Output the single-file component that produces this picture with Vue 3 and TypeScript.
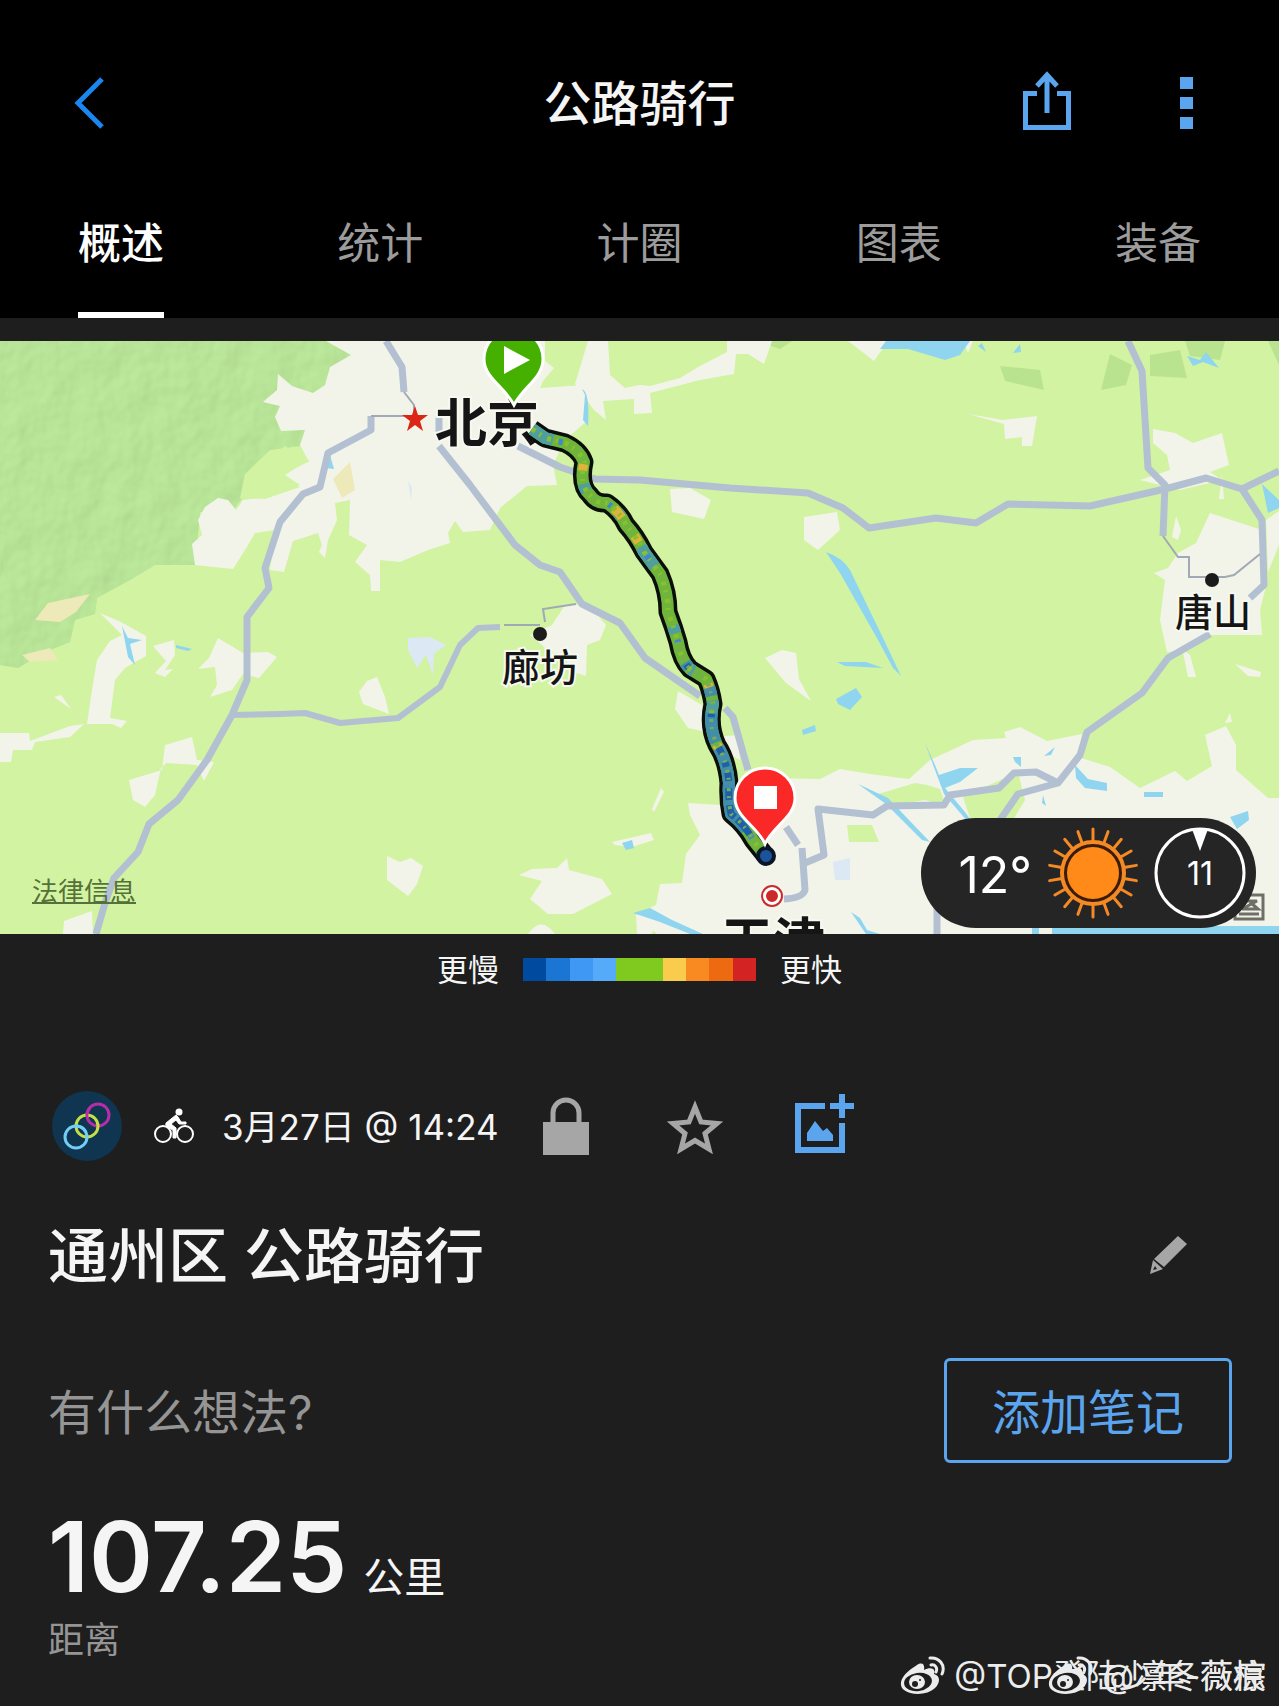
<script setup lang="ts">
import { ref } from 'vue'

const tabs: string[] = ['概述', '统计', '计圈', '图表', '装备']
const activeTab = ref<string>(tabs[0])

const paceColors: string[] = [
  '#004b9f', '#1a76d2', '#3f98f3', '#56aafa', '#80c91f',
  '#80c91f', '#f9cc4e', '#f98a22', '#ed6a10', '#d32323',
]

const track =
  'M532 429 L545 438 L565 443 Q580 450 584 462 Q579 485 590 495 Q596 504 607 503 Q620 512 626 525 Q636 536 644 552 Q652 563 660 574 Q668 592 668 612 Q674 628 678 642 Q681 660 690 669 L706 679 Q711 690 713 704 Q708 726 717 745 Q727 760 729 783 Q728 800 731 814 Q745 825 753 840 L765 855'

const lowerTrack =
  'M678 642 Q681 660 690 669 L706 679 Q711 690 713 704 Q708 726 717 745 Q727 760 729 783 Q728 800 731 814 Q745 825 753 840 L765 855'

const rays: number[] = Array.from({ length: 18 }, (_, i) => i * 20)

const watermarks: string[] = ['@TOP登陆少年-薇棕', '@凛冬薇痕']
</script>

<template>
  <main class="page">
    <header class="header">
      <div class="topbar">
        <button class="icon-btn back" aria-label="返回">
          <svg width="32" height="56" viewBox="0 0 32 56"><path d="M29 4 L5 28 L29 52" fill="none" stroke="#1a86f0" stroke-width="5" /></svg>
        </button>
        <h1>公路骑行</h1>
        <div class="actions">
          <button class="icon-btn" aria-label="分享">
            <svg width="48" height="64" viewBox="0 0 48 64" fill="none" stroke="#5ba4ee" stroke-width="5">
              <path d="M14 22.500H2.500V56.500H45.500V22.500H34" />
              <path d="M24 42V4M14 15L24 4L34 15" />
            </svg>
          </button>
          <button class="icon-btn" aria-label="更多">
            <svg width="14" height="54" viewBox="0 0 14 54" fill="#5ba4ee"><path d="M0 1h13v12H0zM0 21h13v12H0zM0 41h13v12H0z" /></svg>
          </button>
        </div>
      </div>
      <nav class="tabs">
        <button
          v-for="tab in tabs"
          :key="tab"
          :class="['tab', { active: tab === activeTab }]"
          @click="activeTab = tab"
        >{{ tab }}</button>
      </nav>
    </header>

    <section class="map">
      <svg class="map-canvas" viewBox="0 341 1279 593" role="img" aria-label="骑行路线地图">
        <defs>
          <filter id="relief" x="0" y="0" width="100%" height="100%">
            <feTurbulence type="fractalNoise" baseFrequency="0.035 0.03" numOctaves="3" seed="9" result="n" />
            <feDiffuseLighting in="n" surfaceScale="2.500" lighting-color="#c4efa2" result="l">
              <feDistantLight azimuth="225" elevation="64" />
            </feDiffuseLighting>
            <feComposite in="l" in2="SourceGraphic" operator="in" />
          </filter>
        </defs>
        <rect x="0" y="341" width="1279" height="593" fill="#d2f3a2" />

        <!-- hills -->
        <path d="M0 341H340L360 355L330 400L300 446L270 450L247 472L241 500L232 512L200 512L195 565L155 565L130 580L97 598L95 614L75 620L70 642L45 652L18 668L0 665Z" fill="#b4e594" />
        <path d="M0 341H340L360 355L330 400L300 446L270 450L247 472L241 500L232 512L200 512L195 565L155 565L130 580L97 598L95 614L75 620L70 642L45 652L18 668L0 665Z" filter="url(#relief)" opacity="0.600" />
        <path d="M1000 366L1040 370L1044 390L1005 381ZM1110 354L1132 365L1126 385L1101 390ZM1150 355L1180 350L1187 378L1150 376ZM1185 341H1225L1220 360L1190 356ZM1268 341H1279V365ZM757 341H792L780 349Z" fill="#b4df8c" opacity="0.800" />

        <!-- built-up areas -->
        <g fill="#f2f4ea">
          <path d="M326 341L351 355L330 367L325 385L313 393L292 386L278 374L277 390L263 402L280 406L275 417L281 431L305 430L300 445L308 460L285 475L300 485L265 497L243 500L236 510L228 500L218 498L205 507L198 520L202 535L192 544L195 565L233 569L245 550L255 533L275 530L270 570L284 572L293 541L318 533L322 545L319 552L325 558L328 540L337 520L335 503L350 500L349 535L367 545L355 562L370 575L371 591L380 591L380 560L400 562L428 550L450 543L448 533L455 521L463 532L490 530L500 508L527 486L557 485L553 465L565 440L588 420L585 385L540 388L543 381L554 368L545 361V341Z" />
          <path d="M588 341H608L610 375L625 388L640 385L650 386L680 378L700 366L727 352V341H772L764 364L748 354L736 354L734 374L700 380L650 393L652 413L634 414V399L603 401L606 420L594 410L575 384Z" />
          <path d="M848 341H888L874 361ZM963 341H973L968 353ZM968 414L1003 420L1037 416L1032 446L1022 446V437L1005 439L1004 424Z" />
          <path d="M1153 429L1175 433L1193 443L1222 433L1225 447L1229 465L1210 472L1222 480L1180 490L1140 480L1170 470L1167 455L1153 443ZM1210 513L1262 530L1265 590L1260 610L1262 635L1207 635L1190 650L1167 652L1160 620L1165 580L1154 573L1168 568L1178 553L1196 543ZM1279 511L1266 520L1268 572L1279 545ZM1176 516L1181 530L1178 540L1172 537ZM1222 475L1224 499L1219 499Z" />
          <path d="M670 489L690 488L711 500L704 519L672 512ZM804 517L837 512L840 530L818 550L804 540ZM765 658L782 650L796 653L799 679L811 701L786 683ZM678 691L702 705L707 732L688 728L675 709ZM715 737L738 735L740 760L730 755Z" />
          <path d="M565 605L588 604L606 625L600 640L587 645L586 676L570 671L565 655L550 652L530 635L552 625Z" />
          <path d="M100 613L121 622L146 636V656L125 668L115 680L110 718L127 721L121 728L112 724H87L92 690L97 660L110 641L122 635ZM153 646L174 640L175 655L165 670L173 669L165 677L155 673L166 661ZM198 669L209 658L218 638L243 653L268 652L277 657L259 678L243 674L232 690L210 697L217 685L215 667ZM54 697L61 695L71 709ZM0 733H29L30 741L70 726L84 724L70 737L35 742L32 750L13 750L11 762H0ZM165 745L192 737L197 760L214 762L204 781L197 765L166 763L161 768L155 795L145 807L133 800L129 780L162 770ZM359 692L367 681L377 677L385 697L389 714L363 704ZM387 856L400 862L411 858L423 866L417 884L408 896L387 880ZM64 921L92 911L93 934H63ZM519 875L532 869L557 868L567 858L569 870L602 879L612 894L573 914H548L530 899L542 881ZM612 842L651 833L654 840L632 847L615 845ZM652 809L661 788L664 792L654 812Z" />
          <path d="M688 803L720 805L731 795L760 778L820 779L840 769L870 774L909 779L930 760L973 740L1006 738L1004 732L1020 727L1047 741L1082 734L1078 757L1110 767L1140 788L1175 771L1187 781L1212 766L1205 735L1226 726L1236 745V770L1268 798H1279V934H657L636 915L656 905L660 884L682 883L686 854L700 835L690 815Z" />
          <path d="M528 934Q541 915 555 934ZM636 915L656 918L652 934H637Z" />
          <path d="M1163 635H1210L1183 652L1188 677L1196 677L1190 655ZM1235 664L1261 672L1260 677L1248 676ZM1225 723L1230 713L1232 722Z" />
        </g>
        <g fill="#d2f3a2">
          <path d="M847 825L872 825L879 842L849 842ZM963 797L1018 772L1025 800L1007 830L970 818ZM925 800L946 806L940 789L927 785L915 783L875 795L890 806Z" />
          <path d="M240 498L245 474L285 446L310 461L282 475L300 487L265 499Z" />
        </g>
        <path d="M333 479L350 462L355 490L342 498ZM35 620L48 603L90 594L76 612L60 622ZM22 655L50 648L58 660L30 662Z" fill="#eee9b8" />

        <!-- water -->
        <g fill="#8fd5ef">
          <path d="M886 341H970L960 355L945 360L925 354L908 349H880ZM978 346L986 352L982 343ZM1013 353L1020 344L1021 352ZM1187 356L1200 360L1206 352L1219 368L1203 362L1193 366ZM1262 484L1279 500V508L1268 513ZM330 455L334 469L326 468ZM122 626L128 638L142 640L130 644L135 665L128 657ZM176 645L192 649L188 651L176 648Z" />
          <path d="M826 552Q843 558 850 570L884 640L901 676L893 668L878 640L840 573ZM837 662H866L883 668L845 666ZM836 699L856 688L862 697L850 710L838 704ZM802 730L815 725L816 731L803 735ZM622 843L632 840L634 848L626 850ZM633 913L650 908L672 920L703 934H690L660 922Z" />
          <path d="M925 743L935 765L939 775L960 768L978 768L960 782L945 788L965 812L975 826L968 822L944 794L935 770ZM858 784L888 798L930 842L922 840L886 804ZM1013 757H1021V767L1015 762ZM1044 756L1055 747L1051 755ZM1075 765L1088 779L1107 783V791L1085 788L1076 778ZM1144 792H1163V797H1144ZM1230 817L1248 811L1249 820L1237 829ZM1052 926H1279V934H1052ZM1032 926H1039V934H1032ZM851 912L860 918L867 930L880 934H866ZM582 389Q590 392 588 426L583 420L585 395Z" />
          <path d="M1043 795L1046 806L1042 803Z" />
        </g>
        <path d="M408 638L430 637L446 645L434 654L433 675L426 655L417 668L408 650ZM833 862L850 858V880L835 880ZM408 481L412 488L411 500Z" fill="#dce8f3" />

        <!-- roads -->
        <g fill="none" stroke="#b3c0d2" stroke-width="7" stroke-linejoin="round">
          <path d="M386 341L402 367L404 392" />
          <path d="M371 416V430L328 453L320 487L303 494L280 522L265 568L269 588L247 617V680L232 715L207 760L178 800L149 824L138 852L114 878L105 903L96 934" />
          <path d="M231 715L280 714L305 713L340 723L398 718L440 687L460 645L478 628L500 627" stroke-width="6" />
          <path d="M439 446L470 485L515 545L540 565L560 572L582 604L620 623L645 658L700 696M725 708L733 717L748 770M786 827L798 845" stroke-width="7" />
          <path d="M518 446L560 467L595 479L640 480L730 488L808 493L843 508L869 528L936 518L976 523L1008 504L1090 506L1165 489L1206 478L1242 489L1279 471" />
          <path d="M1128 341L1142 371L1148 468L1165 485L1163 536M1242 489L1262 520L1264 585L1250 598" />
          <path d="M1210 634L1168 658L1142 693L1087 732L1080 755L1058 783L1036 772L1014 773L999 788L950 795L944 805L887 806L873 815L818 809L824 855L805 863M1058 783L1018 794L1000 820" />
          <path d="M802 848L805 890Q803 898 784 899M937 905V934" />
        </g>
        <path d="M404 392L414 405V416H371M504 625H540M545 622L543 609L576 604M1163 536L1178 557H1189V577H1225L1234 575L1260 554" fill="none" stroke="#a0a9b5" stroke-width="2" />
        <path d="M439 417V432" stroke="#b3c0d2" stroke-width="7" />

        <!-- places -->
        <path d="M415 406L418 415L428 415L420 421L423 431L415 425L407 431L410 421L402 415L412 415Z" fill="#dc2515" />
        <g fill="#1b1b1b">
          <circle cx="540" cy="634" r="7" />
          <circle cx="1212" cy="580" r="7" />
        </g>
        <g fill="none" stroke="#cc2a2a">
          <circle cx="772" cy="896" r="10" stroke-width="2" fill="#fff" />
          <circle cx="772" cy="896" r="4" stroke-width="4" fill="#cc2a2a" />
        </g>
        <g class="place">
          <text class="large" x="435" y="442" font-size="52">北京</text>
          <text x="502" y="681" font-size="38">廊坊</text>
          <text x="1175" y="626" font-size="38">唐山</text>
          <text class="large" x="721" y="961" font-size="52">天津</text>
        </g>

        <!-- ridden track, coloured by pace -->
        <g fill="none" stroke-linejoin="round">
          <path :d="track" stroke="#0b0f0b" stroke-width="19" />
          <path :d="track" stroke="#6fb43c" stroke-width="12" />
          <path :d="track" stroke="#4f9fa0" stroke-width="12" stroke-dasharray="24 62 8 40 4 37" />
          <path :d="track" stroke="#e0b43a" stroke-width="9" stroke-dasharray="0 66 7 55 12 22 8 97" />
          <path :d="track" stroke="#8ac02c" stroke-width="5" stroke-dasharray="4 5 2 7" />
          <path :d="track" stroke="#3f88d0" stroke-width="6" stroke-dasharray="0 30 4 87 3 31" />
          <path :d="lowerTrack" stroke="#3d8ab4" stroke-width="12" stroke-dasharray="0 22 6 30 9 17 30 6 90 2" opacity="0.900" />
          <path :d="lowerTrack" stroke="#1d60a8" stroke-width="7" stroke-dasharray="0 24 4 57 3 32 7 9 5 6 8 7 12 5 14 3 20 4" />
          <path :d="lowerTrack" stroke="#74ab5c" stroke-width="4" stroke-dasharray="3 5 2 8" />
          <circle cx="766" cy="856" r="8" fill="#1b549c" stroke="#0a1626" stroke-width="4" />
        </g>
        <g stroke="#fff" stroke-width="3">
          <path d="M514 405C505 387 484 378 484 359A29 29 0 0 1 543 359C543 378 523 387 514 405Z" fill="#45b000" />
          <path d="M765 844C757 826 735 817 735 798A30 30 0 0 1 795 798C795 817 773 826 765 844Z" fill="#fb2828" />
        </g>
        <path d="M504 346V374L530 360ZM754 786H777V809H754Z" fill="#fff" />
        <g fill="none" stroke="#6e7068" stroke-width="3">
          <path d="M1235 895H1263V919H1235ZM1241 901H1257L1242 909H1258L1250 902M1239 914H1259" />
        </g>
      </svg>

      <a class="legal" href="#legal">法律信息</a>

      <aside class="weather" aria-label="天气">
        <span class="temp">12°</span>
        <svg width="92" height="92" viewBox="-46 -46 92 92">
          <g stroke="#f58a25" stroke-width="3" stroke-linecap="round">
            <line v-for="angle in rays" :key="angle" x1="0" y1="-33" x2="0" y2="-44" :transform="`rotate(${angle})`" />
          </g>
          <circle r="31" fill="#3a1c05" stroke="#f58a25" stroke-width="4" />
          <circle r="26" fill="#ff8919" />
        </svg>
        <span class="wind">
          <svg width="92" height="92" viewBox="-46 -46 92 92">
            <circle r="44" fill="none" stroke="#fff" stroke-width="3" />
            <path d="M-8 -44H8L0 -22Z" fill="#fff" />
          </svg>
          <b>11</b>
        </span>
      </aside>
    </section>

    <div class="legend">
      <span>更慢</span>
      <div class="scale"><i v-for="(color, i) in paceColors" :key="i" :style="{ background: color }"></i></div>
      <span>更快</span>
    </div>

    <section class="details">
      <div class="meta">
        <svg class="avatar" width="70" height="70" viewBox="0 0 70 70">
          <circle cx="35" cy="35" r="35" fill="#0f3550" />
          <g fill="none" stroke-width="3">
            <circle cx="46" cy="24" r="11" stroke="#b52ea8" />
            <circle cx="35" cy="35" r="11" stroke="#c3e046" />
            <circle cx="24" cy="46" r="11" stroke="#74cdf4" />
            <path d="M35 26A11 11 0 0 1 38 17" stroke="#b52ea8" />
            <path d="M24 35A11 11 0 0 1 34 41" stroke="#74cdf4" />
          </g>
        </svg>
        <svg class="bike" width="40" height="36" viewBox="0 0 40 36">
          <g fill="none" stroke="#fff" stroke-width="2"><circle cx="9" cy="26" r="8" /><circle cx="31" cy="26" r="8" /></g>
          <circle cx="25" cy="4" r="3.500" fill="#fff" />
          <path d="M22 7L12 15Q11 17 13 19L19 22V30H22V20L17 16L22 12L25 16H32V14H27L24 9Z" fill="#fff" stroke="#fff" stroke-linejoin="round" />
        </svg>
        <time>3月27日 @ 14:24</time>
        <button class="icon-btn lock" aria-label="隐私">
          <svg width="46" height="60" viewBox="0 0 46 60"><path d="M10 28V17A13 13 0 0 1 36 17V28" fill="none" stroke="#a6a6a6" stroke-width="5" /><path d="M0 26H46V59H0Z" fill="#a6a6a6" /></svg>
        </button>
        <button class="icon-btn star" aria-label="收藏">
          <svg width="58" height="56" viewBox="0 0 58 56"><path d="M29 9L35 24L51 25.500L39 35.500L43 51L29 42.500L15 51L19 35.500L7 25.500L23 24Z" fill="none" stroke="#a6a6a6" stroke-width="5" /></svg>
        </button>
        <button class="icon-btn photo" aria-label="添加照片">
          <svg width="60" height="64" viewBox="0 0 60 64" fill="#5ba4ee"><path d="M0 9H30V15H6V53H44V29H50V59H0ZM44 0H50V9H59V15H50V24H44V15H35V9H44ZM12 47V39L20 27L28 37L32 34L38 41V47Z" /></svg>
        </button>
      </div>

      <div class="title-row">
        <h2>通州区 公路骑行</h2>
        <button class="icon-btn" aria-label="编辑">
          <svg width="40" height="40" viewBox="0 0 40 40"><path d="M29 0L38 8L15 31L5 23ZM4 24L14 33L1 38ZM6 30L4 34L8 33Z" fill="#a6a6a6" fill-rule="evenodd" /></svg>
        </button>
      </div>

      <div class="note-row">
        <p>有什么想法?</p>
        <button class="note-btn">添加笔记</button>
      </div>

      <dl class="stat">
        <dd><strong>107.25</strong><span>公里</span></dd>
        <dt>距离</dt>
      </dl>
    </section>

    <div v-for="mark in watermarks" :key="mark" class="watermark">
      <svg width="46" height="40" viewBox="0 0 46 40">
        <path d="M17 9C22 6 25 8 24 14C30 11 36 12 34 18C41 20 40 27 35 32C28 39 12 40 4 34C-3 28 2 18 17 9Z" fill="#ececec" />
        <ellipse cx="18" cy="26" rx="14" ry="9" fill="#1e1e1e" transform="rotate(-8 18 26)" />
        <ellipse cx="17" cy="26" rx="8" ry="7" fill="#ececec" />
        <circle cx="15" cy="28" r="3" fill="#1e1e1e" /><circle cx="20" cy="24" r="1" fill="#1e1e1e" />
        <path d="M30 2C39 1 46 9 42 18M31 9C35 8 38 12 36 16" fill="none" stroke="#ececec" stroke-width="3" stroke-linecap="round" />
      </svg>
      <span>{{ mark }}</span>
    </div>
  </main>
</template>

<style>
body {
  margin: 0;
  background: #1e1e1e;
}
</style>

<style scoped>
.page {
  position: relative;
  min-height: 100vh;
  background: #1e1e1e;
  color: #f5f5f5;
  font-family: Inter, "Noto Sans CJK SC", sans-serif;
}
h1, h2, p, dl, dd {
  margin: 0;
}
button {
  padding: 0;
  border: 0;
  background: none;
  color: inherit;
  font: inherit;
  cursor: pointer;
}
svg {
  display: block;
}
.header {
  background: #000;
  margin-bottom: 23px;
}
.topbar {
  display: grid;
  grid-template-columns: 1fr auto 1fr;
  align-items: center;
  height: 126px;
  padding: 40px 85px 0 73px;
}
.topbar {
  padding: 40px 85px 0;
}
.back {
  justify-self: start;
  margin-left: -12px;
}
h1 {
  padding-top: 2px;
  font-size: 48px;
  font-weight: 500;
  line-height: 60px;
}
.actions {
  display: flex;
  align-items: center;
  justify-content: flex-end;
  gap: 109px;
}
.tabs {
  display: flex;
  justify-content: space-between;
  padding: 0 78px;
}
.tab {
  height: 152px;
  padding-bottom: 4px;
  border-top: 6px solid transparent;
  border-bottom: 6px solid transparent;
  color: #9c9c9c;
  font-size: 43px;
}
.tab.active {
  border-bottom-color: #fff;
  color: #fff;
  font-weight: 500;
}
.map {
  position: relative;
  overflow: hidden;
}
.map-canvas {
  width: 100%;
  height: auto;
}
.place {
  fill: #151515;
  stroke: #f7f9f0;
  stroke-width: 4px;
  paint-order: stroke;
  font-family: "Noto Sans CJK SC", sans-serif;
  font-weight: 500;
}
.large {
  font-weight: 700;
}
.legal {
  position: absolute;
  left: 32px;
  bottom: 22px;
  color: #557038;
  font-size: 26px;
  line-height: 40px;
  text-decoration-thickness: 2px;
}
.weather {
  position: absolute;
  right: 23px;
  bottom: 6px;
  display: flex;
  align-items: center;
  justify-content: flex-end;
  gap: 15px;
  box-sizing: border-box;
  width: 335px;
  height: 110px;
  padding-right: 10px;
  border-radius: 55px;
  background: #252525;
  color: #fff;
}
.temp {
  padding-top: 4px;
  font-size: 50px;
}
.wind {
  display: grid;
  place-items: center;
}
.wind > * {
  grid-area: 1 / 1;
}
.wind b {
  font-size: 32px;
  font-weight: 400;
}
.legend {
  display: flex;
  align-items: center;
  justify-content: center;
  gap: 24px;
  height: 70px;
  font-size: 31px;
}
.legend span {
  padding-bottom: 4px;
}
.scale {
  display: flex;
  width: 233px;
  height: 23px;
}
.scale i {
  flex: 1;
}
.details {
  padding: 87px 47px 40px 48px;
}
.meta {
  display: flex;
  align-items: center;
  height: 70px;
}
.avatar {
  margin: 0 32px 0 4px;
}
.bike {
  margin-right: 28px;
}
time {
  padding-bottom: 4px;
  font-size: 35px;
  white-space: nowrap;
}
.lock {
  margin-left: 44px;
}
.star {
  margin-left: 77px;
}
.photo {
  margin-left: 71px;
}
.title-row {
  display: flex;
  align-items: center;
  justify-content: space-between;
  height: 70px;
  margin-top: 60px;
  padding-right: 43px;
}
h2 {
  font-size: 60px;
  font-weight: 500;
  line-height: 70px;
}
.note-row {
  display: flex;
  align-items: center;
  justify-content: space-between;
  margin-top: 67px;
  color: #959595;
  font-size: 48px;
}
.note-row p {
  padding-bottom: 4px;
}
.note-btn {
  height: 105px;
  padding: 0 45px 4px;
  border: 3px solid #5ba4ee;
  border-radius: 6px;
  color: #5ba4ee;
}
.stat {
  display: flex;
  flex-direction: column;
  gap: 10px;
  margin-top: 46px;
}
.stat dd {
  display: flex;
  align-items: baseline;
  gap: 16px;
  height: 96px;
}
.stat strong {
  font-size: 97px;
  font-weight: 600;
  line-height: 96px;
}
.stat span {
  font-size: 41px;
}
.stat dt {
  color: #959595;
  font-size: 36px;
  line-height: 50px;
}
.watermark {
  position: absolute;
  right: 13px;
  bottom: 10px;
  display: flex;
  align-items: center;
  gap: 8px;
  color: #ececec;
  font-size: 33px;
  line-height: 40px;
  white-space: nowrap;
}
</style>
